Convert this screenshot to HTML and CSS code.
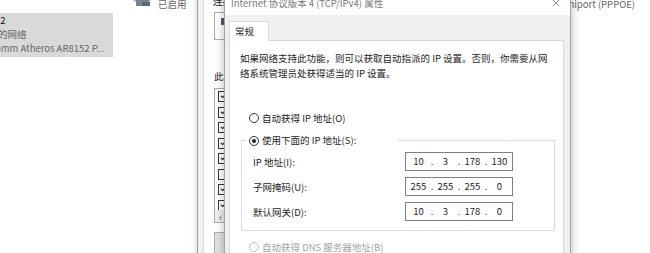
FILE: index.html
```html
<!doctype html>
<html lang="zh-CN">
    <head>
        <meta charset="UTF-8" />
        <meta name="viewport" content="width=device-width, initial-scale=1.0" />
        <title>Internet 协议版本 4 (TCP/IPv4) 属性</title>
        <link rel="stylesheet" href="styles.css">
    </head>
    <body>
        <div class="desktop">
            <!-- 网络连接窗口 -->
            <div class="explorer">
                <div class="tile tile-top">
                    <svg class="tile-icon" viewBox="0 0 20 38">
                        <rect x="1" y="14" width="16" height="18" rx="1" fill="#d6dde4" stroke="#8a949e" />
                        <rect x="3" y="31" width="13" height="6" fill="#7b8591" />
                        <rect x="9" y="33" width="8" height="4" fill="#5c6672" />
                    </svg>
                    <div class="tile-text">
                        <div class="tile-name">以太网</div>
                        <div class="tile-sub">网络</div>
                        <div class="tile-sub">已启用</div>
                    </div>
                </div>
                <div class="tile tile-wan">
                    <svg class="tile-icon" viewBox="0 0 20 38">
                        <rect x="1" y="14" width="16" height="18" rx="1" fill="#d6dde4" stroke="#8a949e" />
                    </svg>
                    <div class="tile-text">
                        <div class="tile-name">宽带连接</div>
                        <div class="tile-sub">已断开连接</div>
                        <div class="tile-sub">WAN Miniport (PPPOE)</div>
                    </div>
                </div>
                <div class="tile tile-selected">
                    <svg class="tile-icon" viewBox="0 0 20 38"></svg>
                    <div class="tile-text">
                        <div class="tile-name">以太网 2</div>
                        <div class="tile-sub">未识别的网络</div>
                        <div class="tile-sub">Qualcomm Atheros AR8152 P...</div>
                    </div>
                </div>
            </div>

            <!-- 以太网 属性（被对话框遮住，只露出左边一条） -->
            <div class="props">
                <div class="props-sheet">
                    <div class="props-label">连接时使用:</div>
                    <div class="adapter-box">
                        <span class="adapter-icon"></span>
                    </div>
                    <div class="props-caption">此连接使用下列项目:</div>
                    <div class="item-list">
                        <div class="items">
                            <div class="item"><span class="check on"></span></div>
                            <div class="item"><span class="check on"></span></div>
                            <div class="item"><span class="check on"></span></div>
                            <div class="item"><span class="check on"></span></div>
                            <div class="item"><span class="check on"></span></div>
                            <div class="item"><span class="check"></span></div>
                            <div class="item"><span class="check on"></span></div>
                            <div class="item"><span class="check on"></span></div>
                        </div>
                        <div class="hscroll">&lsaquo;</div>
                    </div>
                    <div class="props-button"></div>
                </div>
            </div>

            <!-- Internet 协议版本 4 属性 对话框 -->
            <div class="dialog">
                <div class="title-bar">
                    <span class="title">Internet 协议版本 4 (TCP/IPv4) 属性</span>
                    <svg class="close" viewBox="0 0 10 10">
                        <path d="M1 1 L9 9 M9 1 L1 9" stroke="#6e6e6e" stroke-width="1" fill="none" />
                    </svg>
                </div>
                <div class="dialog-body">
                    <div class="tabs">
                        <div class="tab">常规</div>
                    </div>
                    <div class="tab-panel">
                        <p class="intro">
                            如果网络支持此功能，则可以获取自动指派的 IP 设置。否则，你需要从网<br>
                            络系统管理员处获得适当的 IP 设置。
                        </p>

                        <div class="radio-row">
                            <span class="radio"></span>
                            自动获得 IP 地址(O)
                        </div>

                        <div class="group">
                            <div class="group-head">
                                <span class="radio checked"></span>
                                使用下面的 IP 地址(S):
                            </div>
                            <div class="group-rows">
                                <div class="ip-row">
                                    <span class="ip-label">IP 地址(I):</span>
                                    <div class="ip-box">
                                        <span class="octet">10</span><span class="dot">.</span>
                                        <span class="octet">3</span><span class="dot">.</span>
                                        <span class="octet">178</span><span class="dot">.</span>
                                        <span class="octet">130</span>
                                    </div>
                                </div>
                                <div class="ip-row">
                                    <span class="ip-label">子网掩码(U):</span>
                                    <div class="ip-box">
                                        <span class="octet">255</span><span class="dot">.</span>
                                        <span class="octet">255</span><span class="dot">.</span>
                                        <span class="octet">255</span><span class="dot">.</span>
                                        <span class="octet">0</span>
                                    </div>
                                </div>
                                <div class="ip-row">
                                    <span class="ip-label">默认网关(D):</span>
                                    <div class="ip-box">
                                        <span class="octet">10</span><span class="dot">.</span>
                                        <span class="octet">3</span><span class="dot">.</span>
                                        <span class="octet">178</span><span class="dot">.</span>
                                        <span class="octet">0</span>
                                    </div>
                                </div>
                            </div>
                        </div>

                        <div class="radio-row dns disabled">
                            <span class="radio"></span>
                            自动获得 DNS 服务器地址(B)
                        </div>
                    </div>
                </div>
            </div>
        </div>
    </body>
</html>
```

FILE: styles.css
```css
body {
    margin: 0;
    font-family: "Noto Sans CJK SC", "Noto Sans", sans-serif;
    font-size: 9.5px;
    color: #1c1c1c;
    background: #fff;
    overflow: hidden;
}

.desktop {
    position: relative;
    width: 650px;
    height: 253px;
    overflow: hidden;
    background: #fff;
}

/* 网络连接窗口（背景） */
.explorer {
    position: absolute;
    left: -55.5px;
    top: -31px;
    display: grid;
    grid-template-columns: repeat(4, 168.5px);
    grid-auto-rows: 44px;
    column-gap: 20px;
}

.tile {
    display: flex;
    gap: 5px;
    line-height: 14px;
    white-space: nowrap;
}

.tile-icon {
    width: 20px;
    height: 38px;
    flex: none;
}

.tile-text {
    overflow: hidden;
}

.tile-name {
    color: #111;
}

.tile-sub {
    color: #666;
}

.tile-top {
    grid-column: 2;
    grid-row: 1;
}

.tile-wan {
    grid-column: 4;
    grid-row: 1;
}

.tile-selected {
    grid-column: 1;
    grid-row: 2;
    background: #d9d9d9;
}

/* 以太网 属性 */
.props {
    position: absolute;
    left: 197px;
    top: -6px;
    width: 32px;
    height: 270px;
    box-sizing: border-box;
    overflow: hidden;
    background: #f0f0f0;
    border-left: 1px solid #a0a0a0;
    box-shadow: -2px 0 5px rgba(0, 0, 0, 0.12);
    padding-left: 5px;
}

.props-sheet {
    width: 300px;
    height: 100%;
    background: #fff;
    border-left: 1px solid #d9d9d9;
    padding-left: 10px;
    line-height: 14px;
    white-space: nowrap;
}

.props-label {
    margin-left: -1px;
}

.adapter-box {
    margin-top: 4px;
    height: 28px;
    width: 200px;
    box-sizing: border-box;
    border: 1px solid #adadad;
    background: #fff;
    padding: 5px 0 0 6px;
}

.adapter-icon {
    display: block;
    width: 3px;
    height: 7px;
    background: #4a5b70;
}

.props-caption {
    margin-top: 29px;
}

.item-list {
    margin-top: 5px;
    height: 135px;
    width: 220px;
    box-sizing: border-box;
    border: 1px solid #adadad;
    display: flex;
    flex-direction: column;
}

.items {
    flex: 1;
    overflow: hidden;
    padding-left: 3px;
}

.item {
    height: 15.5px;
    display: flex;
    align-items: center;
}

.check {
    width: 9px;
    height: 9px;
    border: 1px solid #333;
    background: #fff;
    position: relative;
}

.check.on::after {
    content: "";
    position: absolute;
    left: 3px;
    top: 0px;
    width: 2px;
    height: 5px;
    border: solid #222;
    border-width: 0 1px 1px 0;
    transform: rotate(40deg);
}

.hscroll {
    height: 12px;
    line-height: 12px;
    padding-left: 4px;
    background: #f0f0f0;
    color: #555;
    font-size: 11px;
}

.props-button {
    margin-top: 9px;
    width: 80px;
    height: 24px;
    box-sizing: border-box;
    background: #e1e1e1;
    border: 1px solid #adadad;
}

/* Internet 协议版本 4 属性 对话框 */
.dialog {
    position: absolute;
    left: 224px;
    top: -10px;
    width: 347px;
    height: 280px;
    box-sizing: border-box;
    border: 1px solid #a3a3a3;
    background: #f0f0f0;
    box-shadow: 0 0 9px rgba(0, 0, 0, 0.28);
    z-index: 2;
}

.title-bar {
    height: 24px;
    line-height: 24px;
    background: #fff;
    padding-left: 6px;
    display: flex;
    justify-content: space-between;
    align-items: center;
}

.title {
    color: #7a7a7a;
    white-space: nowrap;
}

.close {
    width: 8px;
    height: 8px;
    margin-right: 10px;
}

.dialog-body {
    padding: 6px 6px 0 4px;
}

.tabs {
    display: flex;
}

.tab {
    position: relative;
    z-index: 1;
    width: 40px;
    height: 20px;
    box-sizing: border-box;
    margin-bottom: -1px;
    padding-left: 5px;
    line-height: 18px;
    background: #fff;
    border: 1px solid #d9d9d9;
    border-bottom: none;
}

.tab-panel {
    background: #fff;
    border: 1px solid #d9d9d9;
    padding: 10px 8px 0 10px;
    height: 240px;
}

.intro {
    margin: 0;
    line-height: 15px;
    white-space: nowrap;
}

.radio-row {
    margin-top: 27.5px;
    height: 19px;
    line-height: 19px;
    display: flex;
    align-items: center;
    gap: 3px;
    padding-left: 9px;
}

.radio {
    width: 10px;
    height: 10px;
    box-sizing: border-box;
    border: 1px solid #333;
    border-radius: 50%;
    background: #fff;
    display: inline-flex;
    align-items: center;
    justify-content: center;
    flex: none;
}

.radio.checked::after {
    content: "";
    width: 4px;
    height: 4px;
    border-radius: 50%;
    background: #222;
}

.group {
    margin: 12.5px 0 0 1px;
    border: 1px solid #dcdcdc;
}

.group-head {
    margin: -10px 0 0 4px;
    width: 152px;
    height: 19px;
    box-sizing: border-box;
    padding-left: 3px;
    background: #fff;
    display: flex;
    align-items: center;
    gap: 3px;
    line-height: 19px;
}

.group-rows {
    padding: 2px 0 9px 11px;
    display: flex;
    flex-direction: column;
    gap: 6px;
}

.ip-row {
    display: flex;
    align-items: center;
    height: 19px;
}

.ip-label {
    width: 152px;
}

.ip-box {
    width: 108px;
    height: 19px;
    box-sizing: border-box;
    border: 1px solid #7f7f7f;
    display: flex;
    line-height: 17px;
}

.octet {
    width: 25px;
    text-align: center;
}

.dot {
    width: 2px;
    display: flex;
    justify-content: center;
}

.dns {
    margin-top: 6.5px;
}

.disabled {
    color: #a3a3a3;
}

.disabled .radio {
    border-color: #c4c4c4;
}
```
